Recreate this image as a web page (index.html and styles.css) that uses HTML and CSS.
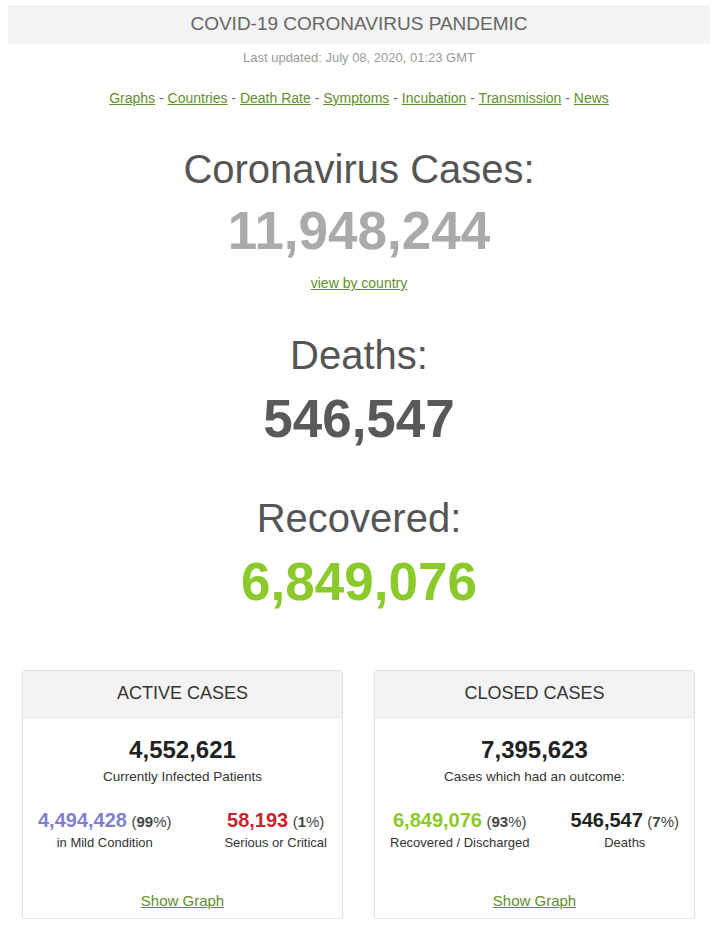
FILE: index.html
```html
<!DOCTYPE html>
<html lang="en">
<head>
  <meta charset="UTF-8">
  <meta name="viewport" content="width=device-width, initial-scale=1.0">
  <title>COVID-19 Coronavirus Pandemic</title>
  <link rel="stylesheet" href="styles.css">
</head>
<body>

  <!-- Top title bar -->
  <div class="title-bar">COVID-19 CORONAVIRUS PANDEMIC</div>
  <div class="updated">Last updated: July 08, 2020, 01:23 GMT</div>

  <div class="nav">
    <a href="#">Graphs</a> - <a href="#">Countries</a> - <a href="#">Death Rate</a> - <a href="#">Symptoms</a> - <a href="#">Incubation</a> - <a href="#">Transmission</a> - <a href="#">News</a>
  </div>

  <!-- Main counters -->
  <div class="counter cases">
    <h1>Coronavirus Cases:</h1>
    <div class="number">11,948,244</div>
    <a href="#" class="country-link">view by country</a>
  </div>

  <div class="counter deaths">
    <h1>Deaths:</h1>
    <div class="number">546,547</div>
  </div>

  <div class="counter recovered">
    <h1>Recovered:</h1>
    <div class="number">6,849,076</div>
  </div>

  <!-- Active / closed panels -->
  <div class="panels">
    <div class="panel">
      <div class="panel-title">ACTIVE CASES</div>
      <div class="panel-body">
        <div class="panel-number">4,552,621</div>
        <div class="panel-label">Currently Infected Patients</div>
        <div class="split">
          <div class="split-col">
            <div><span class="split-num mild">4,494,428</span> <span class="pct">(<strong>99</strong>%)</span></div>
            <div class="split-label">in Mild Condition</div>
          </div>
          <div class="split-col">
            <div><span class="split-num serious">58,193</span> <span class="pct">(<strong>1</strong>%)</span></div>
            <div class="split-label">Serious or Critical</div>
          </div>
        </div>
        <a href="#" class="graph-link">Show Graph</a>
      </div>
    </div>

    <div class="panel">
      <div class="panel-title">CLOSED CASES</div>
      <div class="panel-body">
        <div class="panel-number">7,395,623</div>
        <div class="panel-label">Cases which had an outcome:</div>
        <div class="split">
          <div class="split-col">
            <div><span class="split-num recov">6,849,076</span> <span class="pct">(<strong>93</strong>%)</span></div>
            <div class="split-label">Recovered / Discharged</div>
          </div>
          <div class="split-col">
            <div><span class="split-num dead">546,547</span> <span class="pct">(<strong>7</strong>%)</span></div>
            <div class="split-label">Deaths</div>
          </div>
        </div>
        <a href="#" class="graph-link">Show Graph</a>
      </div>
    </div>
  </div>

</body>
</html>
```

FILE: styles.css
```css
/* Page basics */
body {
  font-family: "Liberation Sans", Arial, sans-serif;
  margin: 0;
  padding: 5px 9px 0 8px;
  background-color: #fff;
  color: #333;
  text-align: center;
}

a {
  color: #5f8f2b;
  text-decoration: underline;
}

.title-bar {
  background-color: #f3f3f3;
  color: #666;
  font-size: 19px;
  height: 39px;
  line-height: 38px;
}

.updated {
  color: #999;
  font-size: 13px;
  margin-top: 6px;
  line-height: 16px;
}

.nav {
  color: #666;
  font-size: 14px;
  margin-top: 24px;
  line-height: 16px;
}

/* Big counters */
.counter h1 {
  font-size: 40px;
  font-weight: normal;
  color: #555;
  margin: 0;
  line-height: 46px;
}

.counter .number {
  font-size: 53px;
  font-weight: bold;
  line-height: 60px;
}

.cases {
  margin-top: 40px;
}

.cases .number {
  color: #aaa;
  margin-top: 9px;
}

.country-link {
  display: inline-block;
  font-size: 14px;
  margin-top: 14px;
}

.deaths {
  margin-top: 40px;
}

.deaths .number {
  color: #595959;
  margin-top: 11px;
}

.recovered {
  margin-top: 46px;
}

.recovered .number {
  color: #8aca2b;
  margin-top: 11px;
}

/* Panels */
.panels {
  display: flex;
  justify-content: space-between;
  margin: 58px 15px 0 14px;
}

.panel {
  width: 319px;
  border: 1px solid #e2e2e2;
  border-radius: 3px;
  box-shadow: 0px 1px 2px rgba(0, 0, 0, 0.06);
}

.panel-title {
  background-color: #f3f3f3;
  border-bottom: 1px solid #e6e6e6;
  color: #333;
  font-size: 18px;
  height: 46px;
  line-height: 45px;
}

.panel-body {
  padding: 19px 15px 8px;
}

.panel-number {
  font-size: 24px;
  font-weight: bold;
  color: #222;
  line-height: 26px;
}

.panel-label {
  font-size: 13.5px;
  color: #333;
  margin-top: 6px;
}

.split {
  display: flex;
  justify-content: space-between;
  margin-top: 25px;
}

.split-num {
  font-size: 20px;
  font-weight: bold;
}

.pct {
  font-size: 15px;
  color: #444;
}

.split-label {
  font-size: 13px;
  color: #333;
  margin-top: 3px;
}

.mild {
  color: #8080cf;
}

.serious {
  color: #c8242e;
}

.recov {
  color: #8aca2b;
}

.dead {
  color: #222;
}

.graph-link {
  display: inline-block;
  font-size: 15px;
  margin-top: 42px;
}
```
